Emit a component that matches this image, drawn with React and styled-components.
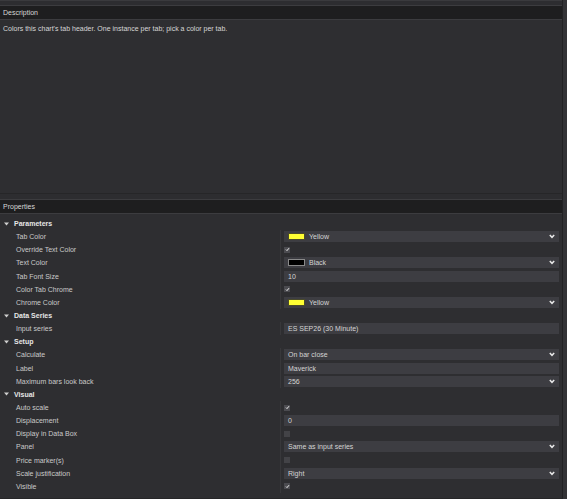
import React from "react";
import styled, { createGlobalStyle } from "styled-components";

const GlobalStyle = createGlobalStyle`
  html, body {
    margin: 0;
    padding: 0;
    background: #2d2d30;
    overflow: hidden;
  }
  body {
    font-family: "Liberation Sans", Arial, sans-serif;
    font-size: 7px;
    color: #c4c4c4;
  }
`;

const Window = styled.div`
  width: 567px;
  height: 499px;
  display: flex;
  background: #2d2d30;
  overflow: hidden;
`;

const Main = styled.div`
  width: 562px;
  display: flex;
  flex-direction: column;
  padding-top: 4px;
  border-top: 1px solid #3a3a3d;
  box-sizing: border-box;
`;

const ScrollEdge = styled.div`
  width: 4px;
  border-left: 1px solid #222224;
  background: #333336;
`;

const Panel = styled.section`
  display: flex;
  flex-direction: column;
  height: ${(p) => p.$height || "auto"};
  flex: ${(p) => (p.$grow ? 1 : "none")};
  border-bottom: 1px solid #262628;
  background: #2e2e31;
`;

const PanelHeader = styled.div`
  height: 13px;
  display: flex;
  align-items: center;
  padding-left: 3px;
  background: #1e1e1f;
  border-top: 1px solid #3c3c3f;
  border-bottom: 1px solid #3c3c3f;
  color: #d6d6d6;
  font-size: 7px;
`;

const DescText = styled.div`
  padding: 5px 3px;
  color: #d6d6d6;
`;

const Gap = styled.div`
  height: 5px;
  background: #2d2d30;
`;

const List = styled.div`
  padding-top: 3px;
  display: flex;
  flex-direction: column;
`;

const Row = styled.div`
  height: 13.15px;
  display: grid;
  grid-template-columns: 280px 1fr;
  align-items: center;
`;

const SectionRow = styled.div`
  height: 13.15px;
  display: flex;
  align-items: center;
  gap: 5px;
  padding-left: 4px;
  color: #e6e6e6;
  font-weight: bold;
`;

const Label = styled.div`
  padding-left: 16px;
  color: #cacaca;
`;

const ValueCell = styled.div`
  height: 100%;
  display: flex;
  align-items: center;
  border-left: 1px solid #38383b;
  padding-left: 3px;
  padding-right: 3px;
`;

const Field = styled.div`
  flex: 1;
  height: 11px;
  display: flex;
  align-items: center;
  gap: 4px;
  padding: 0 4px;
  background: #3d3d42;
  color: #d4d4d4;
`;

const FieldText = styled.span`
  flex: 1;
`;

const Swatch = styled.span`
  width: 15px;
  height: 5px;
  background: ${(p) => p.$color};
  border: 1px solid ${(p) => (p.$color === "#000000" ? "#8a8a8a" : "#4a4a2a")};
`;

const Check = styled.span`
  width: 6px;
  height: 6px;
  display: flex;
  align-items: center;
  justify-content: center;
  background: ${(p) => (p.$on ? "#4b4b50" : "#434347")};
`;

const Triangle = () => (
  <svg width="5" height="4" viewBox="0 0 5 4">
    <path d="M0 0.5 L5 0.5 L2.5 3.5 Z" fill="#cfcfcf" />
  </svg>
);

const Chevron = () => (
  <svg width="6" height="5" viewBox="0 0 6 5">
    <path d="M0.8 1 L3 3.3 L5.2 1" fill="none" stroke="#e8e8e8" strokeWidth="1.5" />
  </svg>
);

const Tick = () => (
  <svg width="5" height="5" viewBox="0 0 5 5">
    <path d="M1 2.6 L2 3.6 L4 1.2" fill="none" stroke="#f2f2f2" strokeWidth="1" />
  </svg>
);

const sections = [
  {
    title: "Parameters",
    items: [
      { label: "Tab Color", kind: "color", color: "#ffff33", text: "Yellow" },
      { label: "Override Text Color", kind: "check", on: true },
      { label: "Text Color", kind: "color", color: "#000000", text: "Black" },
      { label: "Tab Font Size", kind: "text", text: "10" },
      { label: "Color Tab Chrome", kind: "check", on: true },
      { label: "Chrome Color", kind: "color", color: "#ffff33", text: "Yellow" },
    ],
  },
  {
    title: "Data Series",
    items: [{ label: "Input series", kind: "text", text: "ES SEP26 (30 Minute)" }],
  },
  {
    title: "Setup",
    items: [
      { label: "Calculate", kind: "select", text: "On bar close" },
      { label: "Label", kind: "text", text: "Maverick" },
      { label: "Maximum bars look back", kind: "select", text: "256" },
    ],
  },
  {
    title: "Visual",
    items: [
      { label: "Auto scale", kind: "check", on: true },
      { label: "Displacement", kind: "text", text: "0" },
      { label: "Display in Data Box", kind: "check", on: false },
      { label: "Panel", kind: "select", text: "Same as input series" },
      { label: "Price marker(s)", kind: "check", on: false },
      { label: "Scale justification", kind: "select", text: "Right" },
      { label: "Visible", kind: "check", on: true },
    ],
  },
];

function Value({ item }) {
  if (item.kind === "check") {
    return <Check $on={item.on}>{item.on && <Tick />}</Check>;
  }
  return (
    <Field>
      {item.kind === "color" && <Swatch $color={item.color} />}
      <FieldText>{item.text}</FieldText>
      {(item.kind === "color" || item.kind === "select") && <Chevron />}
    </Field>
  );
}

export default function App() {
  return (
    <>
      <GlobalStyle />
      <Window>
        <Main>
          <Panel $height="188px">
            <PanelHeader>Description</PanelHeader>
            <DescText>Colors this chart's tab header. One instance per tab; pick a color per tab.</DescText>
          </Panel>
          <Gap />
          <Panel $grow>
            <PanelHeader>Properties</PanelHeader>
            <List>
              {sections.map((s) => (
                <React.Fragment key={s.title}>
                  <SectionRow>
                    <Triangle />
                    {s.title}
                  </SectionRow>
                  {s.items.map((item) => (
                    <Row key={item.label}>
                      <Label>{item.label}</Label>
                      <ValueCell>
                        <Value item={item} />
                      </ValueCell>
                    </Row>
                  ))}
                </React.Fragment>
              ))}
            </List>
          </Panel>
        </Main>
        <ScrollEdge />
      </Window>
    </>
  );
}
